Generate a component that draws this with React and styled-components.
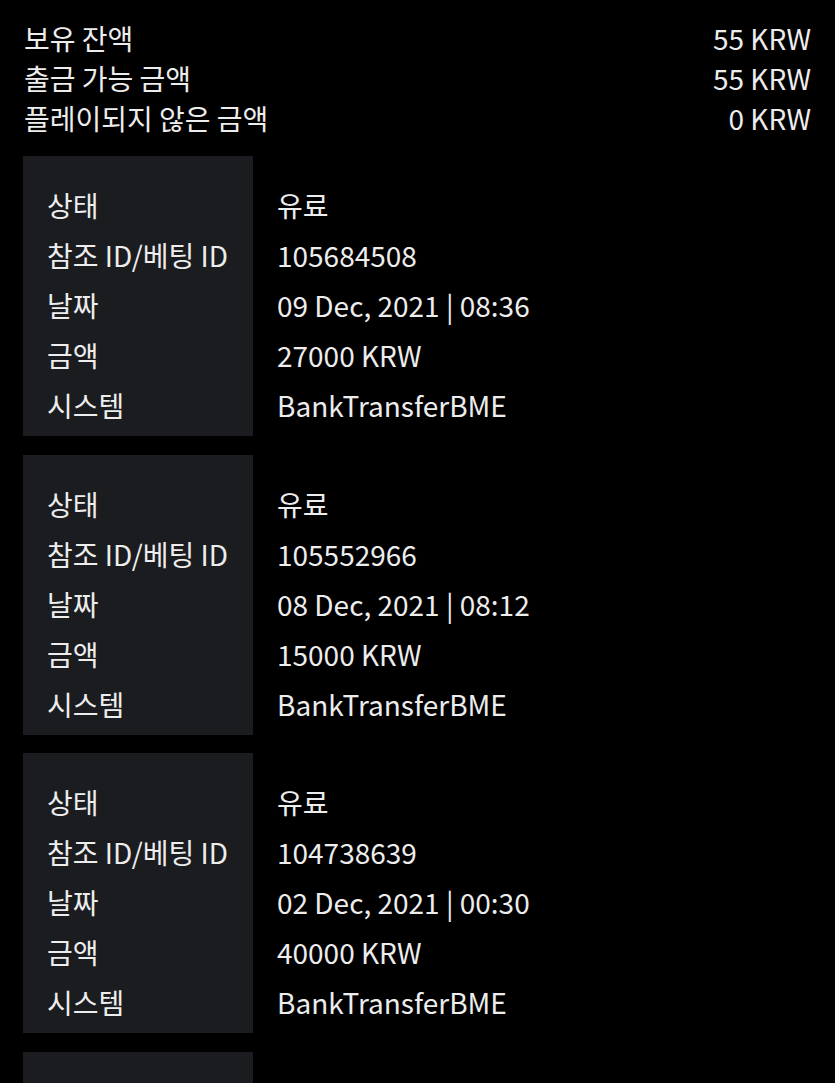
import styled, { createGlobalStyle } from "styled-components";

const GlobalStyle = createGlobalStyle`
  html, body {
    margin: 0;
    padding: 0;
    background: #000;
  }
  body {
    font-family: "Noto Sans CJK KR", "Noto Sans", sans-serif;
    color: #ededed;
  }
`;

const Page = styled.main`
  padding: 18px 24px 0 23px;
  display: flex;
  flex-direction: column;
  gap: 18.5px;
  height: 1083px;
  overflow: hidden;
  box-sizing: border-box;
`;

const Summary = styled.section`
  display: flex;
  flex-direction: column;
  padding-left: 1px;
  margin-bottom: -0.5px;
`;

const SummaryRow = styled.div`
  display: flex;
  justify-content: space-between;
  align-items: center;
  height: 40px;
  font-size: 28px;
`;

const Card = styled.article`
  display: flex;
  flex-shrink: 0;
`;

const Column = styled.div`
  display: flex;
  flex-direction: column;
  padding: 24px 24px 6px;
  background: ${(props) => (props.shaded ? "#1b1c20" : "transparent")};
  width: ${(props) => (props.shaded ? "182px" : "auto")};
`;

const Cell = styled.div`
  height: 50px;
  line-height: 50px;
  font-size: 28px;
  white-space: nowrap;
`;

const summary = [
  ["보유 잔액", "55 KRW"],
  ["출금 가능 금액", "55 KRW"],
  ["플레이되지 않은 금액", "0 KRW"],
];

const labels = ["상태", "참조 ID/베팅 ID", "날짜", "금액", "시스템"];

const transactions = [
  { status: "유료", id: "105684508", date: "09 Dec, 2021 | 08:36", amount: "27000 KRW", system: "BankTransferBME" },
  { status: "유료", id: "105552966", date: "08 Dec, 2021 | 08:12", amount: "15000 KRW", system: "BankTransferBME" },
  { status: "유료", id: "104738639", date: "02 Dec, 2021 | 00:30", amount: "40000 KRW", system: "BankTransferBME" },
  { status: "유료", id: "104512870", date: "30 Nov, 2021 | 21:04", amount: "20000 KRW", system: "BankTransferBME" },
];

const App = () => {
  return (
    <>
      <GlobalStyle />
      <Page>
        <Summary>
          {summary.map(([label, value]) => (
            <SummaryRow key={label}>
              <span>{label}</span>
              <span>{value}</span>
            </SummaryRow>
          ))}
        </Summary>

        {transactions.map((tx) => (
          <Card key={tx.id}>
            <Column shaded>
              {labels.map((label) => (
                <Cell key={label}>{label}</Cell>
              ))}
            </Column>
            <Column>
              <Cell>{tx.status}</Cell>
              <Cell>{tx.id}</Cell>
              <Cell>{tx.date}</Cell>
              <Cell>{tx.amount}</Cell>
              <Cell>{tx.system}</Cell>
            </Column>
          </Card>
        ))}
      </Page>
    </>
  );
};

export default App;
